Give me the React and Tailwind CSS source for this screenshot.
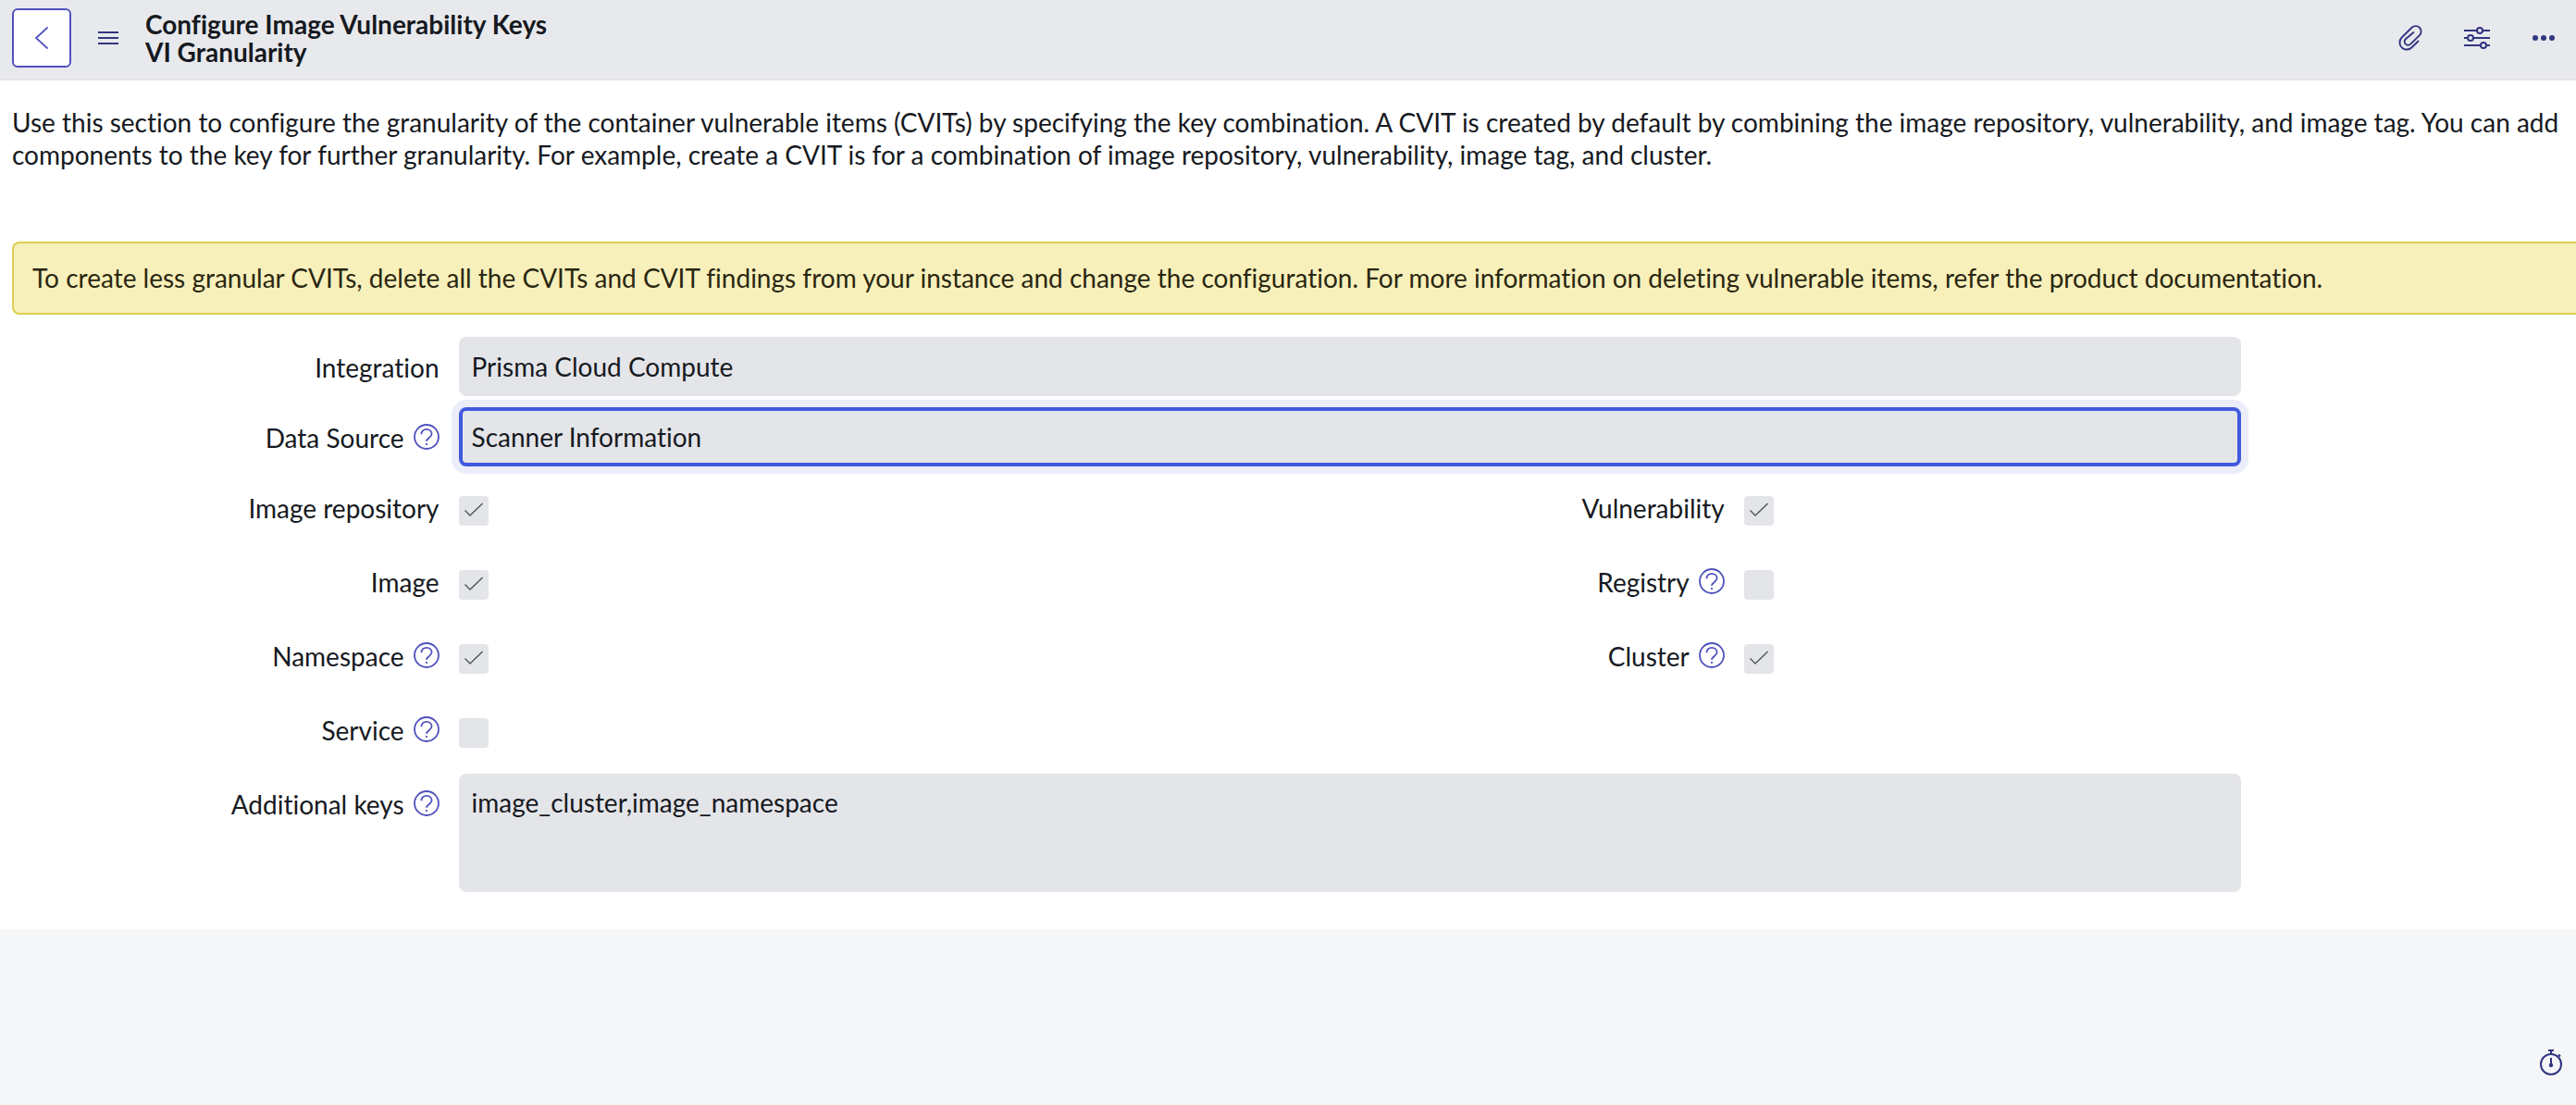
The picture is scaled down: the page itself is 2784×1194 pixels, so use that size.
import React from 'react';

const HelpIcon = () => (
  <svg className="size-7" viewBox="0 0 28 28" fill="none" stroke="#4f52bd" strokeWidth="1.8">
    <circle cx="14" cy="14" r="13" />
    <path d="M8.5 11.2C8.5 7.8 11 5.8 14 5.8s5.6 2 5.6 5c0 4-5.6 4.2-5.6 8" />
    <path d="M14 21v2" />
  </svg>
);

const FieldLabel = ({ htmlFor, children, help }) => (
  <div className="flex items-start justify-end pr-[21px] text-right">
    <label htmlFor={htmlFor}>{children}</label>
    {help && (
      <button type="button" aria-label={`Help for ${children}`} className="ml-2.5 mt-0.5 shrink-0">
        <HelpIcon />
      </button>
    )}
  </div>
);

const CheckField = ({ id, label, help, checked = false }) => (
  <>
    <FieldLabel htmlFor={id} help={help}>{label}</FieldLabel>
    <div className="grid justify-start pt-1">
      <input
        id={id}
        type="checkbox"
        defaultChecked={checked}
        className="peer col-start-1 row-start-1 size-8 appearance-none rounded bg-[#e4e5e9]"
      />
      <svg
        className="pointer-events-none invisible col-start-1 row-start-1 size-8 peer-checked:visible"
        viewBox="0 0 32 32"
        fill="none"
        stroke="#50555f"
        strokeWidth="1.4"
      >
        <path d="M6.5 15.5l5.5 5.5L25.5 8" />
      </svg>
    </div>
  </>
);

const Header = () => (
  <header className="flex h-[87px] items-start border-b-2 border-[#e4e4ea] bg-[#e8e9ed] pl-[13px] pr-[21px] pt-[9px] text-[#32357f]">
    <button
      type="button"
      aria-label="Back"
      className="flex size-16 shrink-0 items-center justify-center rounded-md border-2 border-[#4f52bd] bg-white"
    >
      <svg className="h-6 w-4" viewBox="0 0 16 24" fill="none" stroke="#4f52bd" strokeWidth="1.8">
        <path d="M14.5 0.5L2 12l12.5 11.5" />
      </svg>
    </button>
    <button type="button" aria-label="Menu" className="flex h-16 w-20 shrink-0 items-center justify-center">
      <svg className="h-4 w-[22px]" viewBox="0 0 22 16" stroke="currentColor" strokeWidth="2">
        <path d="M0 2h22M0 8h22M0 14h22" />
      </svg>
    </button>
    <h1 className="pt-0.5 text-[28px] leading-[30px] font-bold text-[#161921]">
      Configure Image Vulnerability Keys
      <br />
      VI Granularity
    </h1>
    <div className="ml-auto flex h-16 shrink-0 items-center gap-11">
      <button type="button" aria-label="Attachments">
        <svg className="size-7" viewBox="0 0 28 28" fill="none" stroke="currentColor" strokeWidth="1.9" strokeLinecap="round">
          <path d="M22.5 17.5l-7 6.8a7.6 7.6 0 0 1-10.8 0 7.6 7.6 0 0 1 0-10.8L15.6 2.8a5.9 5.9 0 0 1 8.3 0 5.9 5.9 0 0 1 0 8.3l-9.7 9.5a3.8 3.8 0 0 1-5.4 0 3.8 3.8 0 0 1 0-5.4L17.4 8" />
        </svg>
      </button>
      <button type="button" aria-label="Personalize form">
        <svg className="size-7" viewBox="0 0 28 28" fill="none" stroke="currentColor" strokeWidth="2">
          <path d="M0 6h14M20 6h8M0 14h4M10 14h18M0 22h18M24 22h4" />
          <circle cx="17" cy="6" r="3" />
          <circle cx="7" cy="14" r="3" />
          <circle cx="21" cy="22" r="3" />
        </svg>
      </button>
      <button type="button" aria-label="More options">
        <svg className="size-7" viewBox="0 0 28 28" fill="currentColor">
          <circle cx="5" cy="14" r="3" />
          <circle cx="14" cy="14" r="3" />
          <circle cx="23" cy="14" r="3" />
        </svg>
      </button>
    </div>
  </header>
);

const App = () => {
  return (
    <div className="flex min-h-screen flex-col overflow-x-hidden bg-[#f5f6f8] font-['Lato',sans-serif] text-[28px] leading-[35px] text-[#161921] [font-variant-ligatures:none]">
      <Header />
      <main className="bg-white pt-7 pb-10">
        <p className="pr-1 pl-[13px]">
          Use this section to configure the granularity of the container vulnerable items (CVITs) by specifying the key
          combination. A CVIT is created by default by combining the image repository, vulnerability, and image tag. You
          can add components to the key for further granularity. For example, create a CVIT is for a combination of image
          repository, vulnerability, image tag, and cluster.
        </p>
        <div
          role="alert"
          className="mt-[76px] ml-[13px] rounded-l-lg border-2 border-r-0 border-[#dccf52] bg-[#f8f0bb] px-5 py-5 text-[#2a2711]"
        >
          To create less granular CVITs, delete all the CVITs and CVIT findings from your instance and change the
          configuration. For more information on deleting vulnerable items, refer the product documentation.
        </div>

        <form className="mt-6">
          <div className="grid grid-cols-[17.8%_69.2%]">
            <div className="pt-4">
              <FieldLabel htmlFor="integration">Integration</FieldLabel>
            </div>
            <input
              id="integration"
              readOnly
              defaultValue="Prisma Cloud Compute"
              className="h-16 rounded-lg bg-[#e4e5e9] px-3.5 outline-none"
            />
          </div>
          <div className="mt-3 grid grid-cols-[17.8%_69.2%]">
            <div className="pt-4">
              <FieldLabel htmlFor="source" help>Data Source</FieldLabel>
            </div>
            <input
              id="source"
              readOnly
              defaultValue="Scanner Information"
              className="h-16 rounded-lg border-4 border-[#4159de] bg-[#e4e5e9] px-2.5 ring-8 ring-[#ebedfb] outline-none"
            />
          </div>

          <div className="mt-7 grid grid-cols-[17.8%_32%_17.9%_1fr] gap-y-11">
            <CheckField id="repository" label="Image repository" checked />
            <CheckField id="vulnerability" label="Vulnerability" checked />
            <CheckField id="image" label="Image" checked />
            <CheckField id="registry" label="Registry" help />
            <CheckField id="namespace" label="Namespace" help checked />
            <CheckField id="cluster" label="Cluster" help checked />
            <CheckField id="service" label="Service" help />
          </div>

          <div className="mt-7 grid grid-cols-[17.8%_69.2%]">
            <div className="pt-4">
              <FieldLabel htmlFor="keys" help>Additional keys</FieldLabel>
            </div>
            <textarea
              id="keys"
              readOnly
              defaultValue="image_cluster,image_namespace"
              className="h-32 resize-none rounded-lg bg-[#e4e5e9] px-3.5 py-3.5 outline-none"
            />
          </div>
        </form>
      </main>
      <footer className="flex flex-1 items-end justify-end pr-[13px] pb-8 text-[#32357f]">
        <button type="button" aria-label="Response time">
          <svg className="size-7" viewBox="0 0 28 28" fill="none" stroke="currentColor" strokeWidth="2">
            <circle cx="14" cy="16" r="11" />
            <path d="M11 1h6M14 1v4M22 5.5l2 2M14 9v8" />
            <circle cx="14" cy="17" r="1.2" fill="currentColor" />
          </svg>
        </button>
      </footer>
    </div>
  );
};

export default App;
